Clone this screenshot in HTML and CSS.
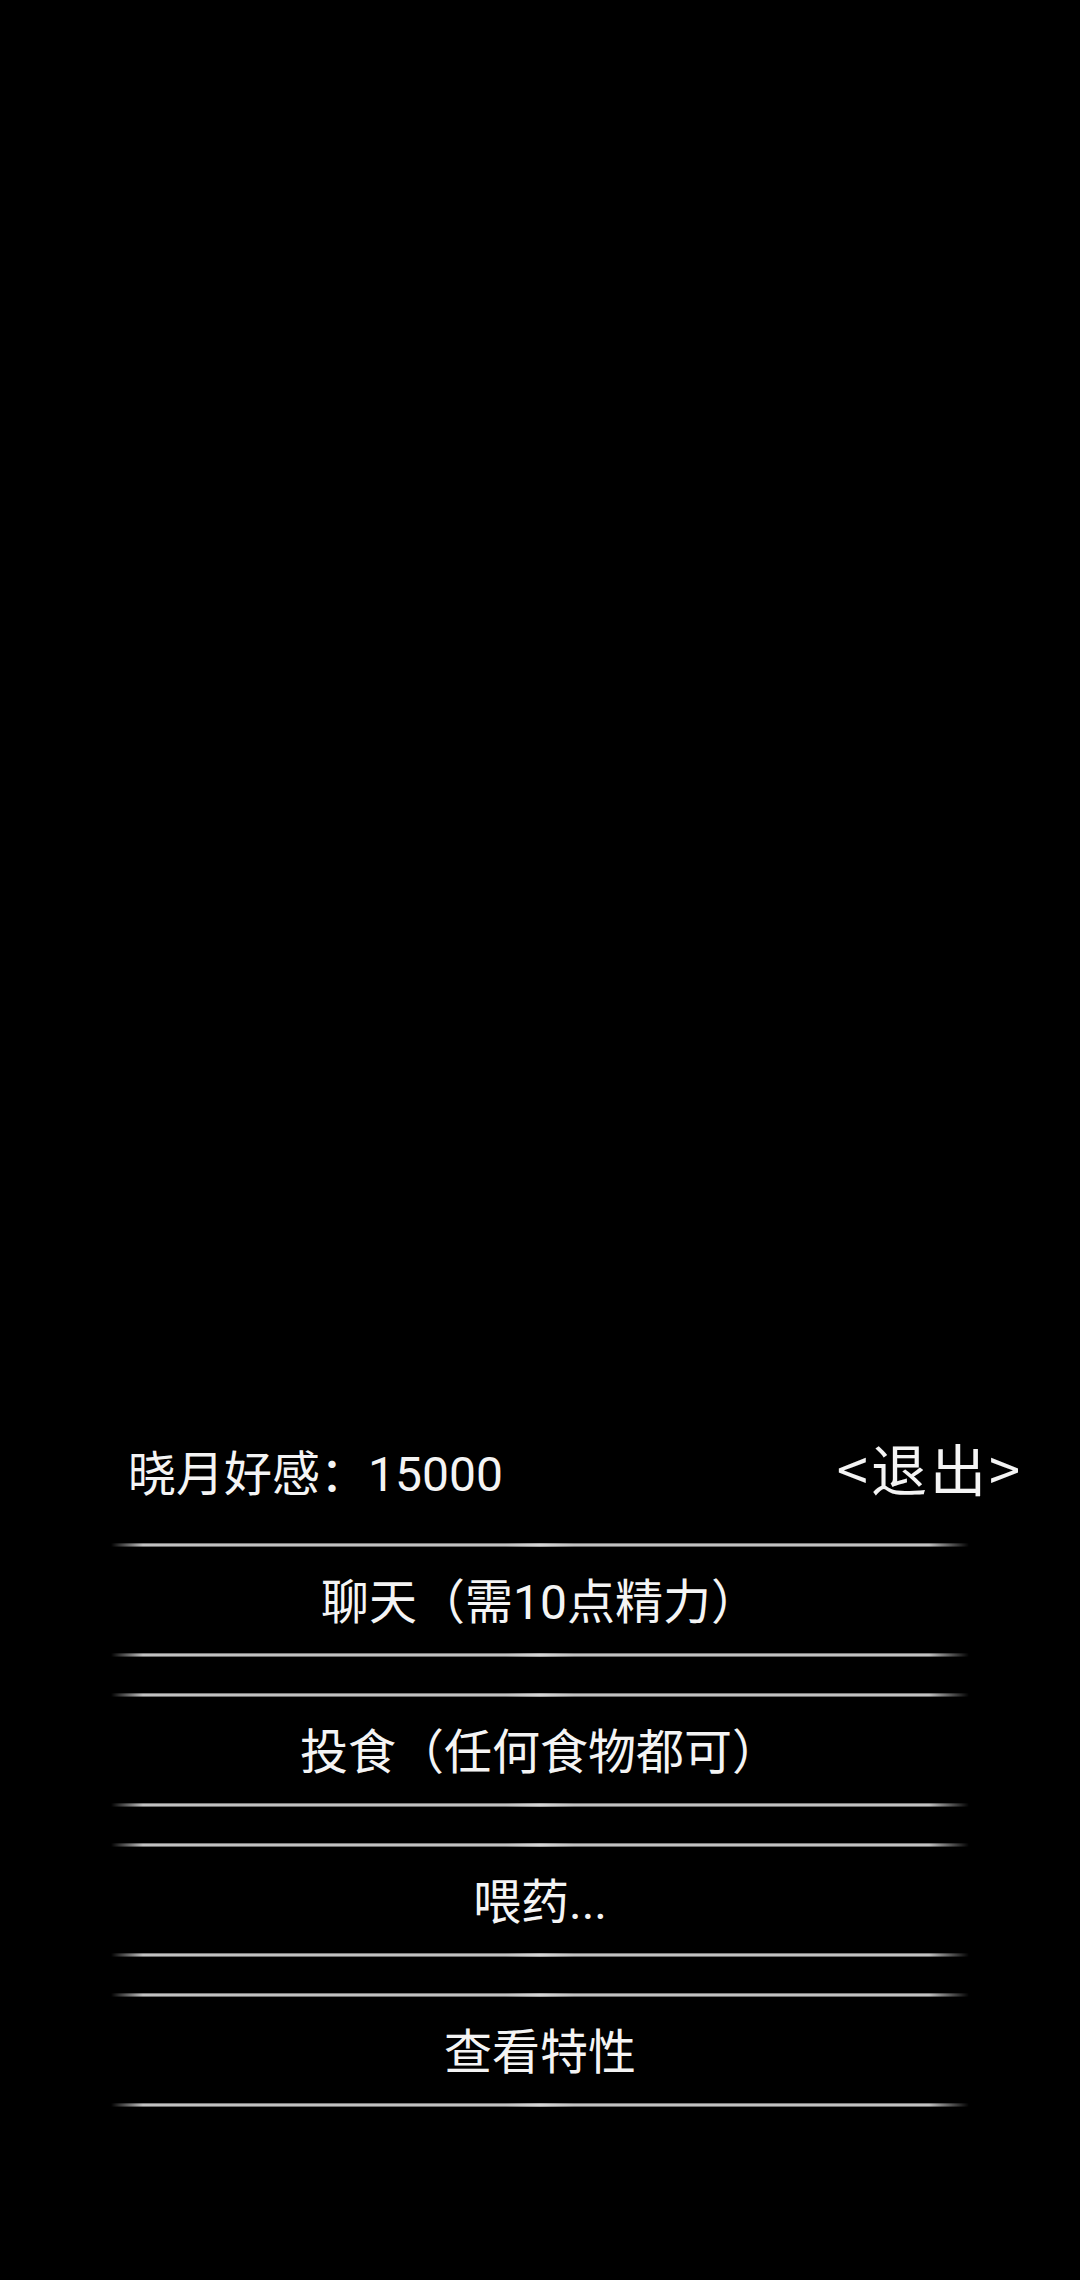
FILE: index.html
```html
<!DOCTYPE html>
<html lang="zh-CN">
<head>
<meta charset="utf-8">
<title>晓月</title>
<link rel="stylesheet" href="styles.css">
</head>
<body>
<main class="screen">
  <header class="status">
    <span class="affection">晓月好感：15000</span>
    <span class="exit">&lt;退出&gt;</span>
  </header>
  <nav class="actions">
    <div class="action">聊天（需10点精力）</div>
    <div class="action">投食（任何食物都可）</div>
    <div class="action">喂药...</div>
    <div class="action">查看特性</div>
  </nav>
</main>
</body>
</html>
```

FILE: styles.css
```css
html, body {
  margin: 0;
  padding: 0;
  background: #000;
}

.screen {
  box-sizing: border-box;
  height: 2280px;
  display: flex;
  flex-direction: column;
  justify-content: flex-end;
  padding-bottom: 173px;
  color: #f4f4f4;
  font-family: Roboto, "Noto Sans CJK SC", sans-serif;
}

.status {
  display: flex;
  justify-content: space-between;
  align-items: baseline;
  height: 64px;
  line-height: 64px;
  padding: 0 60px 0 128px;
  margin-bottom: 44px;
}

.affection {
  font-size: 48px;
}

.exit {
  font-family: "Noto Sans CJK SC", sans-serif;
  font-size: 56px;
  letter-spacing: 3px;
  margin-right: -3px;
}

.actions {
  display: flex;
  flex-direction: column;
  gap: 36px;
  padding: 0 111px;
}

.action {
  box-sizing: border-box;
  height: 114px;
  display: flex;
  flex-direction: column;
  justify-content: space-between;
  font-size: 48px;
  line-height: 56px;
  text-align: center;
}

/* glowing rule above and below each option, fading out at both ends */
.action::before,
.action::after {
  content: "";
  display: block;
  height: 4px;
  background:
    linear-gradient(to right, rgba(255,255,255,0) 46%, rgba(255,255,255,0.35) 50%, rgba(255,255,255,0) 54%),
    linear-gradient(to bottom, #3e3e3e 0, #bcbcbc 25%, #cacaca 60%, #444 100%);
  -webkit-mask-image: linear-gradient(to right, transparent 0, #000 32px, #000 calc(100% - 40px), transparent 100%);
  mask-image: linear-gradient(to right, transparent 0, #000 32px, #000 calc(100% - 40px), transparent 100%);
}

/* nudges the label a few pixels below the middle */
.action::before {
  margin-bottom: 6px;
}
```
